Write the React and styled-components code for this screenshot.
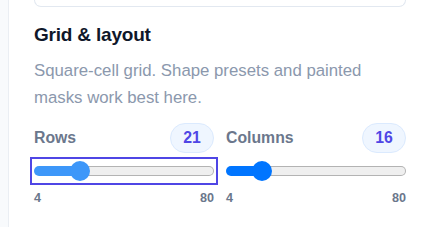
import { useState } from 'react';
import styled, { createGlobalStyle } from 'styled-components';

const GlobalStyle = createGlobalStyle`
  html, body {
    margin: 0;
    padding: 0;
    background: #ffffff;
  }
  body {
    font-family: "Liberation Sans", Arial, sans-serif;
  }
`;

export default function App() {
  const [rows, setRows] = useState(21);
  const [columns, setColumns] = useState(16);

  return (
    <Page>
      <GlobalStyle />
      <Sidebar />
      <Main>
        <CardStub />
        <Title>Grid &amp; layout</Title>
        <Description>
          Square-cell grid. Shape presets and painted masks work best here.
        </Description>
        <Controls>
          <SliderField
            label="Rows"
            value={rows}
            onChange={setRows}
            fill="#3d97f9"
            focused
          />
          <SliderField
            label="Columns"
            value={columns}
            onChange={setColumns}
            fill="#0075ff"
          />
        </Controls>
      </Main>
    </Page>
  );
}

function SliderField({ label, value, onChange, fill, focused, min = 4, max = 80 }) {
  const pct = (value - min) / (max - min);
  return (
    <Field>
      <FieldHeader>
        <Label>{label}</Label>
        <Badge>{value}</Badge>
      </FieldHeader>
      <Range
        type="range"
        min={min}
        max={max}
        value={value}
        $fill={fill}
        $focused={focused}
        style={{ '--pct': pct }}
        onChange={(e) => onChange(Number(e.target.value))}
      />
      <Bounds>
        <span>{min}</span>
        <span>{max}</span>
      </Bounds>
    </Field>
  );
}

const Page = styled.div`
  display: flex;
  height: 227px;
  overflow: hidden;
`;

const Sidebar = styled.div`
  width: 8px;
  flex-shrink: 0;
  background: #f8fafc;
  border-right: 1px solid #eaeef3;
`;

const Main = styled.div`
  flex: 1;
  padding: 0 26px 0 25px;
  display: flex;
  flex-direction: column;
`;

const CardStub = styled.div`
  height: 7px;
  box-sizing: border-box;
  border: 1px solid #e2e8f0;
  border-top: none;
  border-radius: 0 0 12px 12px;
`;

const Title = styled.h2`
  margin: 16px 0 0;
  font-size: 19px;
  line-height: 24px;
  font-weight: 700;
  letter-spacing: -0.2px;
  color: #0f172a;
`;

const Description = styled.p`
  margin: 9.5px 0 0;
  font-size: 16.8px;
  line-height: 27px;
  color: #8b98ad;
`;

const Controls = styled.div`
  display: grid;
  grid-template-columns: 1fr 1fr;
  column-gap: 12px;
  margin-top: 12.5px;
`;

const Field = styled.div`
  display: flex;
  flex-direction: column;
`;

const FieldHeader = styled.div`
  display: flex;
  align-items: center;
  justify-content: space-between;
  height: 30px;
`;

const Label = styled.span`
  font-size: 15.8px;
  font-weight: 700;
  color: #6b778c;
`;

const Badge = styled.span`
  box-sizing: border-box;
  min-width: 44px;
  height: 30px;
  padding: 0 10px;
  display: flex;
  align-items: center;
  justify-content: center;
  border-radius: 15px;
  background: #eff6ff;
  border: 1px solid #dbeafe;
  color: #4f46e5;
  font-size: 15.8px;
  font-weight: 700;
`;

const Range = styled.input`
  -webkit-appearance: none;
  appearance: none;
  display: block;
  width: 100%;
  height: 20px;
  margin: 8px 0 0;
  padding: 0;
  background: transparent;
  outline: ${({ $focused }) => ($focused ? '2px solid #4f46e5' : 'none')};
  outline-offset: 2px;

  &::-webkit-slider-runnable-track {
    box-sizing: border-box;
    height: 10px;
    border-radius: 5px;
    border: 1px solid transparent;
    background:
      linear-gradient(${({ $fill }) => $fill}, ${({ $fill }) => $fill}) 0 0 /
        calc(10px + var(--pct) * (100% - 20px)) 100% no-repeat border-box,
      linear-gradient(#efefef, #efefef) padding-box,
      linear-gradient(#b3b3b3, #b3b3b3) border-box;
  }

  &::-webkit-slider-thumb {
    -webkit-appearance: none;
    appearance: none;
    width: 20px;
    height: 20px;
    margin-top: -6px;
    border: none;
    border-radius: 50%;
    background: ${({ $fill }) => $fill};
  }
`;

const Bounds = styled.div`
  display: flex;
  justify-content: space-between;
  margin-top: 9px;
  font-size: 12.6px;
  line-height: 16px;
  font-weight: 700;
  color: #6b778c;
`;
